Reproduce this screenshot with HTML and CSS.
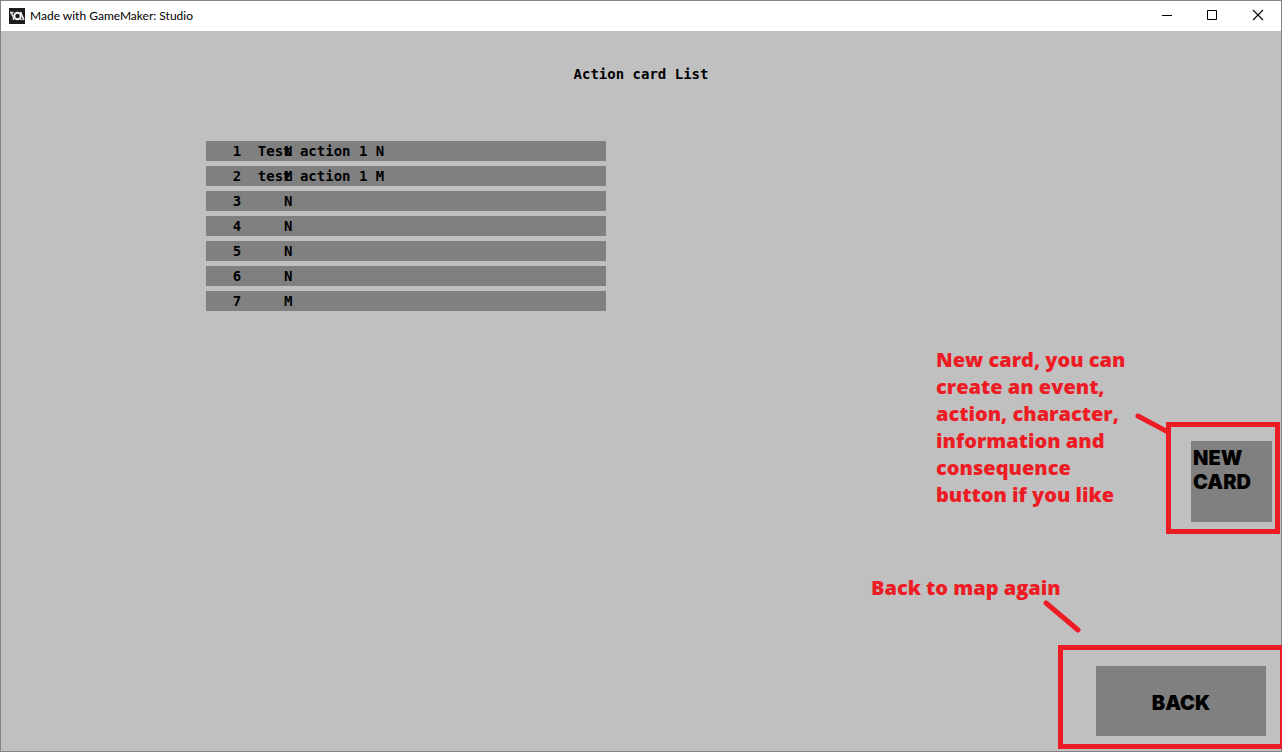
FILE: index.html
```html
<!DOCTYPE html>
<html lang="en">
<head>
<meta charset="utf-8">
<title>Made with GameMaker: Studio</title>
<link rel="stylesheet" href="styles.css">
</head>
<body>
<div class="window">
  <header class="titlebar">
    <svg class="app-icon" viewBox="0 0 16 16" aria-hidden="true">
      <rect width="16" height="16" fill="#1c1c1c"/>
      <path d="M1 4.500h3.500M2 4.500l2.500 4.500v3" fill="none" stroke="#dcdcdc" stroke-width="1.600"/>
      <circle cx="8.500" cy="8" r="3.200" fill="#1c1c1c" stroke="#f4f4f4" stroke-width="1.900"/>
      <path d="M11.500 4l3.300 8" stroke="#f4f4f4" stroke-width="1.700"/>
      <path d="M11 11.500h2" stroke="#dcdcdc" stroke-width="1.200"/>
    </svg>
    <span class="app-name">Made with GameMaker: Studio</span>
    <button class="caption" aria-label="Minimize"><svg viewBox="0 0 11 11"><path d="M1 4.500h10" stroke="#000"/></svg></button>
    <button class="caption" aria-label="Maximize"><svg viewBox="0 0 11 11"><path d="M.5-.500h9v9H.5z" fill="none" stroke="#000"/></svg></button>
    <button class="caption" aria-label="Close"><svg viewBox="0 0 11 11"><path d="M0-1l10 10M10-1L0 9" stroke="#000" stroke-width="1.100"/></svg></button>
  </header>
  <main class="stage">
    <h1 class="heading">Action card List</h1>
    <table class="cards">
      <tbody>
        <tr><td class="num">1</td><td class="name">Test action 1 N</td><td class="kind">N</td><td></td></tr>
        <tr><td class="num">2</td><td class="name">test action 1 M</td><td class="kind">M</td><td></td></tr>
        <tr><td class="num">3</td><td class="name"></td><td class="kind">N</td><td></td></tr>
        <tr><td class="num">4</td><td class="name"></td><td class="kind">N</td><td></td></tr>
        <tr><td class="num">5</td><td class="name"></td><td class="kind">N</td><td></td></tr>
        <tr><td class="num">6</td><td class="name"></td><td class="kind">N</td><td></td></tr>
        <tr><td class="num">7</td><td class="name"></td><td class="kind">M</td><td></td></tr>
      </tbody>
    </table>
    <section class="callout callout-new">
      <p class="note">New card, you can<br>create an event,<br>action, character,<br>information and<br>consequence<br>button if you like</p>
      <svg class="pointer pointer-new" viewBox="0 0 36 22" aria-hidden="true"><path d="M5 4l30 16"/></svg>
      <div class="frame frame-new"><button class="action action-new">NEW<br>CARD</button></div>
    </section>
    <section class="callout callout-back">
      <p class="note">Back to map again</p>
      <svg class="pointer pointer-back" viewBox="0 0 38 34" aria-hidden="true"><path d="M3 3l32 27"/></svg>
      <div class="frame frame-back"><button class="action action-back">BACK</button></div>
    </section>
  </main>
</div>
</body>
</html>
```

FILE: styles.css
```css
* { box-sizing: border-box; }

body { margin: 0; }

.window {
  display: flex;
  flex-direction: column;
  min-height: 100vh;
  border: 1px solid #838383;
  background: #c0c0c0;
}

.titlebar {
  display: flex;
  align-items: center;
  height: 30px;
  padding-left: 8px;
  background: #fff;
}

.app-icon { width: 16px; height: 16px; }

.app-name {
  flex: 1;
  margin-left: 5px;
  font: 12px/20px Lato, "Noto Sans", sans-serif;
  color: #000;
}

.caption {
  display: grid;
  place-items: center;
  width: 46px;
  height: 30px;
  padding: 0;
  border: 0;
  background: none;
}

.caption svg { width: 11px; height: 11px; overflow: visible; }

.stage {
  flex: 1;
  display: flex;
  flex-direction: column;
  padding: 33px 0 2px;
}

.heading,
.cards {
  font: bold 14px/20px "DejaVu Sans Mono", monospace;
  color: #000;
}

.heading { margin: 0; text-align: center; }

.cards {
  table-layout: fixed;
  width: 400px;
  margin: 52px 0 0 16%;
  border-spacing: 0 5px;
}

.cards tr { background: #808080; }

.cards td { height: 20px; padding: 0; white-space: nowrap; }

.cards .num { width: 52px; padding-left: 27px; }

.cards .name { width: 20px; }

.cards .kind { width: 21px; text-align: center; }

.callout { display: flex; }

.callout-new {
  justify-content: flex-end;
  align-items: flex-end;
  margin-top: 30px;
}

.callout-back {
  flex-direction: column;
  align-items: flex-end;
  margin-top: auto;
}

.note {
  margin: 0;
  font: 800 20px/27px "Open Sans", "Liberation Sans", sans-serif;
  color: #ed1c24;
}

.callout-new .note { width: 197px; margin-bottom: 26px; white-space: nowrap; }

.callout-back .note { width: 196px; margin-right: 214px; white-space: nowrap; }

.pointer { fill: none; stroke: #ed1c24; stroke-width: 5px; stroke-linecap: round; }

.pointer-new { width: 36px; height: 22px; margin: 0 -3px 100px 0; }

.pointer-back { width: 38px; height: 34px; margin: -1px 200px 11px 0; }

.frame { border: 5px solid #ed1c24; }

.frame-new { margin-right: 1px; padding: 14px 3px 7px 20px; }

.frame-back {
  margin-right: -1px;
  padding: 16px 14px 8px 33px;
  border-right-width: 2px;
}

.action {
  display: block;
  border: 0;
  background: #808080;
  font: 900 20px/24px Inter, "Liberation Sans", sans-serif;
  color: #000;
}

.action-new { width: 81px; height: 81px; padding: 0 2px 24px; text-align: left; }

.action-back { width: 170px; height: 70px; padding: 4px 0 0; }
```
